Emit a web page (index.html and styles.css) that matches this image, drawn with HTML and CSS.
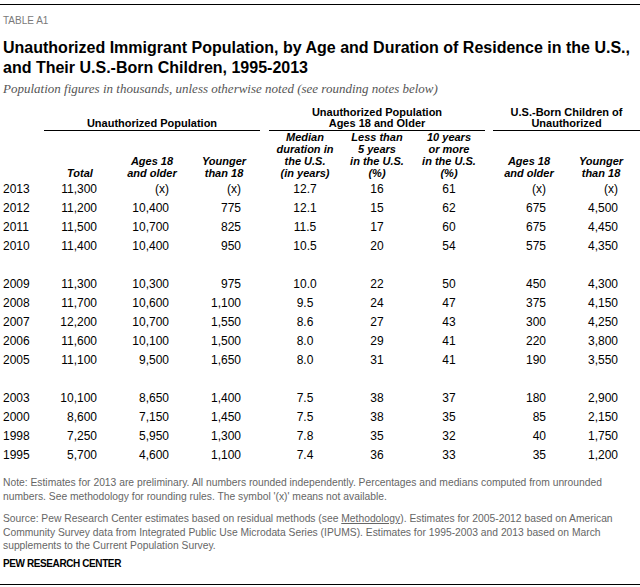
FILE: index.html
```html
<!DOCTYPE html>
<html lang="en">
<head>
    <meta charset="UTF-8">
    <meta name="viewport" content="width=device-width, initial-scale=1.0">
    <title>Table A1 - Unauthorized Immigrant Population</title>
    <link rel="stylesheet" href="styles.css">
</head>
<body>
    <div class="chart">
        <p class="label">TABLE A1</p>
        <h1>Unauthorized Immigrant Population, by Age and Duration of Residence in the U.S.,<br>and Their U.S.-Born Children, 1995-2013</h1>
        <p class="subtitle">Population figures in thousands, unless otherwise noted (see rounding notes below)</p>

        <table>
            <colgroup>
                <col class="c-year">
                <col class="c-num"><col class="c-num"><col class="c-num">
                <col class="c-gap1">
                <col class="c-num"><col class="c-num"><col class="c-num">
                <col class="c-gap2">
                <col class="c-num"><col class="c-num">
                <col class="c-end">
            </colgroup>
            <thead>
                <tr class="groups">
                    <th></th>
                    <th colspan="3" class="group">Unauthorized Population</th>
                    <th></th>
                    <th colspan="3" class="group">Unauthorized Population<br>Ages 18 and Older</th>
                    <th></th>
                    <th colspan="3" class="group">U.S.-Born Children of<br>Unauthorized</th>
                </tr>
                <tr class="heads">
                    <th></th>
                    <th>Total</th>
                    <th>Ages 18<br>and older</th>
                    <th>Younger<br>than 18</th>
                    <th></th>
                    <th>Median<br>duration in<br>the U.S.<br>(in years)</th>
                    <th>Less than<br>5 years<br>in the U.S.<br>(%)</th>
                    <th>10 years<br>or more<br>in the U.S.<br>(%)</th>
                    <th></th>
                    <th>Ages 18<br>and older</th>
                    <th>Younger<br>than 18</th>
                    <th></th>
                </tr>
            </thead>
            <tbody>
                <tr><td class="year">2013</td><td>11,300</td><td>(x)</td><td>(x)</td><td></td><td class="mid">12.7</td><td class="mid">16</td><td class="mid">61</td><td></td><td>(x)</td><td>(x)</td><td></td></tr>
                <tr><td class="year">2012</td><td>11,200</td><td>10,400</td><td>775</td><td></td><td class="mid">12.1</td><td class="mid">15</td><td class="mid">62</td><td></td><td>675</td><td>4,500</td><td></td></tr>
                <tr><td class="year">2011</td><td>11,500</td><td>10,700</td><td>825</td><td></td><td class="mid">11.5</td><td class="mid">17</td><td class="mid">60</td><td></td><td>675</td><td>4,450</td><td></td></tr>
                <tr><td class="year">2010</td><td>11,400</td><td>10,400</td><td>950</td><td></td><td class="mid">10.5</td><td class="mid">20</td><td class="mid">54</td><td></td><td>575</td><td>4,350</td><td></td></tr>
                <tr class="spacer"><td colspan="12"></td></tr>
                <tr><td class="year">2009</td><td>11,300</td><td>10,300</td><td>975</td><td></td><td class="mid">10.0</td><td class="mid">22</td><td class="mid">50</td><td></td><td>450</td><td>4,300</td><td></td></tr>
                <tr><td class="year">2008</td><td>11,700</td><td>10,600</td><td>1,100</td><td></td><td class="mid">9.5</td><td class="mid">24</td><td class="mid">47</td><td></td><td>375</td><td>4,150</td><td></td></tr>
                <tr><td class="year">2007</td><td>12,200</td><td>10,700</td><td>1,550</td><td></td><td class="mid">8.6</td><td class="mid">27</td><td class="mid">43</td><td></td><td>300</td><td>4,250</td><td></td></tr>
                <tr><td class="year">2006</td><td>11,600</td><td>10,100</td><td>1,500</td><td></td><td class="mid">8.0</td><td class="mid">29</td><td class="mid">41</td><td></td><td>220</td><td>3,800</td><td></td></tr>
                <tr><td class="year">2005</td><td>11,100</td><td>9,500</td><td>1,650</td><td></td><td class="mid">8.0</td><td class="mid">31</td><td class="mid">41</td><td></td><td>190</td><td>3,550</td><td></td></tr>
                <tr class="spacer"><td colspan="12"></td></tr>
                <tr><td class="year">2003</td><td>10,100</td><td>8,650</td><td>1,400</td><td></td><td class="mid">7.5</td><td class="mid">38</td><td class="mid">37</td><td></td><td>180</td><td>2,900</td><td></td></tr>
                <tr><td class="year">2000</td><td>8,600</td><td>7,150</td><td>1,450</td><td></td><td class="mid">7.5</td><td class="mid">38</td><td class="mid">35</td><td></td><td>85</td><td>2,150</td><td></td></tr>
                <tr><td class="year">1998</td><td>7,250</td><td>5,950</td><td>1,300</td><td></td><td class="mid">7.8</td><td class="mid">35</td><td class="mid">32</td><td></td><td>40</td><td>1,750</td><td></td></tr>
                <tr><td class="year">1995</td><td>5,700</td><td>4,600</td><td>1,100</td><td></td><td class="mid">7.4</td><td class="mid">36</td><td class="mid">33</td><td></td><td>35</td><td>1,200</td><td></td></tr>
            </tbody>
        </table>

        <p class="note">Note: Estimates for 2013 are preliminary. All numbers rounded independently. Percentages and medians computed from unrounded<br>numbers. See methodology for rounding rules. The symbol '(x)' means not available.</p>
        <p class="note source">Source: Pew Research Center estimates based on residual methods (see <u>Methodology</u>). Estimates for 2005-2012 based on American<br>Community Survey data from Integrated Public Use Microdata Series (IPUMS). Estimates for 1995-2003 and 2013 based on March<br>supplements to the Current Population Survey.</p>
        <p class="credit">PEW RESEARCH CENTER</p>
    </div>
</body>
</html>
```

FILE: styles.css
```css
/* Sayfa */
body {
    margin: 0;
    font-family: "Liberation Sans", Arial, sans-serif;
    color: #000;
    background: #fff;
}

/* Tablo kutusu: üst ve alt siyah çizgi */
.chart {
    width: 640px;
    margin-top: 4px;
    padding: 0 0 14px 3px;
    box-sizing: border-box;
    border-top: 1px solid #000;
    border-bottom: 1px solid #000;
}

.label {
    margin: 10px 0 0;
    font-size: 10px;
    line-height: 12px;
    color: #7a7a7a;
}

h1 {
    margin: 11px 0 0;
    font-size: 16px;
    line-height: 20px;
    font-weight: bold;
}

.subtitle {
    margin: 3px 0 0;
    font-family: "Liberation Serif", "Times New Roman", serif;
    font-style: italic;
    font-size: 13px;
    line-height: 16px;
    color: #555;
}

/* Tablo */
table {
    margin-top: 10px;
    width: 637px;
    table-layout: fixed;
    border-collapse: collapse;
    border-spacing: 0;
}

.c-year { width: 41px; }
.c-num { width: 72px; }
.c-gap1 { width: 9px; }
.c-gap2 { width: 8px; }
.c-end { width: 3px; }

th {
    padding: 0;
    font-weight: bold;
    vertical-align: bottom;
    text-align: center;
}

.groups th {
    font-size: 11px;
    line-height: 11px;
}

.groups .group {
    padding-bottom: 1px;
    border-bottom: 1px solid #000;
}

.heads th {
    font-size: 11px;
    line-height: 12px;
    font-style: italic;
    padding-bottom: 1px;
}

td {
    height: 19px;
    padding: 0 19px 0 0;
    font-size: 12px;
    line-height: 19px;
    text-align: right;
    white-space: nowrap;
}

td.year {
    padding: 0;
    text-align: left;
}

td.mid {
    padding: 0;
    text-align: center;
}

.spacer td {
    padding: 0;
}

/* Notlar */
.note {
    margin: 11px 0 0;
    font-size: 10.3px;
    line-height: 13.5px;
    color: #666;
    white-space: nowrap;
}

.source {
    margin-top: 9px;
}

.credit {
    margin: 5px 0 0;
    font-size: 10px;
    line-height: 12px;
    font-weight: bold;
    letter-spacing: -0.4px;
}
```
